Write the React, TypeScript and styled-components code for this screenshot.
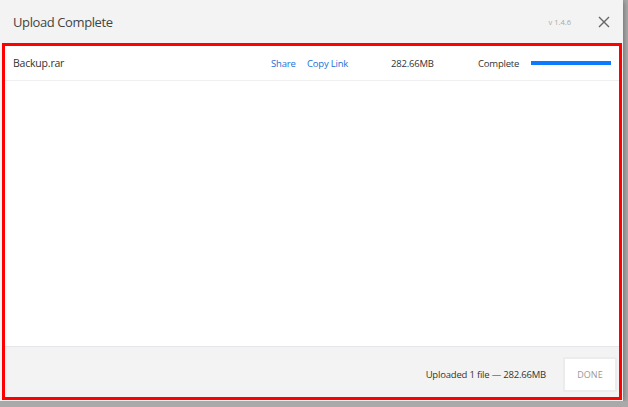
import styled, { createGlobalStyle } from 'styled-components'

const GlobalStyle = createGlobalStyle`
  html, body {
    margin: 0;
    padding: 0;
    background: #a9a9a9;
    font-family: 'Open Sans', 'Liberation Sans', sans-serif;
  }
`

const Dialog = styled.div`
  width: 623px;
  height: 401px;
  background: #f3f3f3;
  box-shadow: 0 1px 6px rgba(0, 0, 0, 0.45);
  display: flex;
  flex-direction: column;
  box-sizing: border-box;
`

const Header = styled.header`
  height: 43px;
  display: flex;
  align-items: center;
  padding: 0 13px 0 13px;
  box-sizing: border-box;
`

const Title = styled.h1`
  flex: 1;
  margin: 0;
  font-size: 13px;
  font-weight: 400;
  letter-spacing: -0.4px;
  color: #444;
`

const Version = styled.span`
  font-size: 7.5px;
  color: #aaa;
  margin-right: 27px;
`

const CloseButton = styled.button`
  border: 0;
  background: none;
  padding: 0;
  width: 12px;
  height: 12px;
  display: flex;
  cursor: pointer;
`

const Body = styled.section`
  flex: 1;
  margin: 0 1px 1px 2px;
  border: 3px solid #ff0000;
  display: flex;
  flex-direction: column;
  min-height: 0;
`

const List = styled.div`
  flex: 1;
  background: #fff;
  border-bottom: 1px solid #e6e6ea;
`

const Row = styled.div`
  height: 34px;
  display: flex;
  align-items: center;
  padding: 0 8px 0 8px;
  border-bottom: 1px solid #efefef;
  font-size: 9.5px;
  letter-spacing: -0.2px;
  color: #333;
`

const FileName = styled.span`
  flex: 1;
  font-size: 10.5px;
  letter-spacing: -0.2px;
`

const LinkButton = styled.a<{ $w: number }>`
  width: ${({ $w }) => $w}px;
  color: #1a6fd6;
  text-decoration: none;
  cursor: pointer;
`

const Cell = styled.span<{ $w: number }>`
  width: ${({ $w }) => $w}px;
`

const Progress = styled.div`
  width: 80px;
  height: 4px;
  background: #0a7bff;
`

const Footer = styled.footer`
  height: 50px;
  display: flex;
  align-items: center;
  justify-content: flex-end;
  gap: 17px;
  padding: 4px 2px 0 0;
  box-sizing: border-box;
`

const Summary = styled.span`
  font-size: 9.5px;
  letter-spacing: -0.2px;
  color: #333;
`

const DoneButton = styled.button`
  width: 54px;
  height: 35px;
  background: #fff;
  border: 2px solid #ececec;
  font-family: inherit;
  font-size: 9px;
  color: #999;
  cursor: pointer;
`

export default function App() {
  return (
    <>
      <GlobalStyle />
      <Dialog>
        <Header>
          <Title>Upload Complete</Title>
          <Version>v 1.4.6</Version>
          <CloseButton aria-label="Close">
            <svg width="12" height="12" viewBox="0 0 12 12">
              <path d="M1 1L11 11M11 1L1 11" stroke="#666" strokeWidth="1.4" />
            </svg>
          </CloseButton>
        </Header>
        <Body>
          <List>
            <Row>
              <FileName>Backup.rar</FileName>
              <LinkButton $w={36}>Share</LinkButton>
              <LinkButton $w={84}>Copy Link</LinkButton>
              <Cell $w={87}>282.66MB</Cell>
              <Cell $w={53}>Complete</Cell>
              <Progress />
            </Row>
          </List>
          <Footer>
            <Summary>Uploaded 1 file — 282.66MB</Summary>
            <DoneButton>DONE</DoneButton>
          </Footer>
        </Body>
      </Dialog>
    </>
  )
}
